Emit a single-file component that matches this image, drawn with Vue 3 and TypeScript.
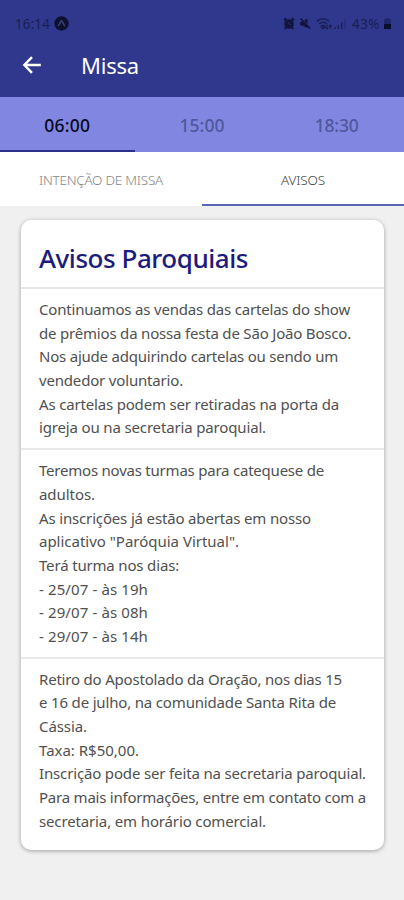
<script setup lang="ts">
import type { Directive } from 'vue'

interface Line {
  text: string
  width: number
}

const times: Line[] = [
  { text: '06:00', width: 46 },
  { text: '15:00', width: 45 },
  { text: '18:30', width: 44 },
]

const notices: Line[][] = [
  [
    { text: 'Continuamos as vendas das cartelas do show', width: 311 },
    { text: 'de prêmios da nossa festa de São João Bosco.', width: 312 },
    { text: 'Nos ajude adquirindo cartelas ou sendo um', width: 299 },
    { text: 'vendedor voluntario.', width: 144 },
    { text: 'As cartelas podem ser retiradas na porta da', width: 300 },
    { text: 'igreja ou na secretaria paroquial.', width: 227 },
  ],
  [
    { text: 'Teremos novas turmas para catequese de', width: 285 },
    { text: 'adultos.', width: 56 },
    { text: 'As inscrições já estão abertas em nosso', width: 272 },
    { text: 'aplicativo "Paróquia Virtual".', width: 200 },
    { text: 'Terá turma nos dias:', width: 140 },
    { text: '- 25/07 - às 19h', width: 109 },
    { text: '- 29/07 - às 08h', width: 109 },
    { text: '- 29/07 - às 14h', width: 109 },
  ],
  [
    { text: 'Retiro do Apostolado da Oração, nos dias 15', width: 303 },
    { text: 'e 16 de julho, na comunidade Santa Rita de', width: 297 },
    { text: 'Cássia.', width: 48 },
    { text: 'Taxa: R$50,00.', width: 100 },
    { text: 'Inscrição pode ser feita na secretaria paroquial.', width: 327 },
    { text: 'Para mais informações, entre em contato com a', width: 327 },
    { text: 'secretaria, em horário comercial.', width: 227 },
  ],
]

// Tracks the text so that it fills the given width in pixels.
const vFit: Directive<HTMLElement, number> = {
  mounted(el, { value }) {
    requestAnimationFrame(() => {
      const natural = el.getBoundingClientRect().width
      const count = (el.textContent ?? '').length
      el.style.letterSpacing = `${(value - natural) / count}px`
    })
  },
}
</script>

<template>
  <div class="screen">
    <header class="top">
      <div class="status">
        <span v-fit="35" class="t">16:14</span>
        <svg class="badge" width="15" height="15" viewBox="0 0 15 15">
          <circle cx="7.5" cy="7.5" r="7.2" fill="#0d1030" />
          <path d="M4.2 10.2 7 5.2q.5-.7 1 0l2.8 5" fill="none" stroke="#3a4079" stroke-width="1.5" />
        </svg>
        <span class="grow"></span>
        <svg width="12" height="13" viewBox="0 0 12 13">
          <circle cx="6" cy="7" r="4.8" fill="#11143c" />
          <path d="M1 3.3 3.3 1.2M11 3.3 8.7 1.2M2.8 10.6 1.8 12M9.2 10.6l1 1.4" stroke="#11143c" stroke-width="2" />
          <path d="M6 5V7l1.6.8" fill="none" stroke="#2c3372" stroke-width="1" />
        </svg>
        <svg class="mute" width="12" height="13" viewBox="0 0 12 13">
          <path d="M1 5h2.2L8.5 1.5v9.8L3.6 8.5H1z" fill="#11143c" />
          <path d="m2 1.2 9.5 10" stroke="#2f388c" stroke-width="1.2" />
          <path d="m1.5 1.5 9.6 10" stroke="#11143c" stroke-width="1.5" />
        </svg>
        <svg class="wifi" width="17" height="13" viewBox="0 0 17 13">
          <path d="M1 4.2q6-4.8 12 0M3 6.8q4-3.2 8 0M5 9.2q2-1.5 4 0" fill="none" stroke="#1a1e55" stroke-width="1.5" />
          <path d="m7 12 2-2H5zM11 7.5v4.3M9.5 10.3l1.5 1.6 1.5-1.6M14.5 12V8M13 9.5 14.5 8 16 9.5" fill="none" stroke="#1a1e55" stroke-width="1.1" />
        </svg>
        <svg class="signal" width="13" height="12" viewBox="0 0 13 12">
          <path d="M1 11V9M4.3 11V7M7.7 11V4.5" stroke="#1a1e55" stroke-width="1.4" />
          <path d="M11 11V1" stroke="#272c70" stroke-width="1.2" />
        </svg>
        <span v-fit="28" class="t pct">43%</span>
        <svg class="battery" width="9" height="12" viewBox="0 0 9 12">
          <path d="M2.8 0h3.4v1.3H8V6H1V1.3h1.8z" fill="#20266b" />
          <path d="M1 6h7v5H1z" fill="#0b0d2c" />
        </svg>
      </div>
      <div class="bar">
        <svg width="20" height="20" viewBox="0 0 20 20">
          <path d="M10 2.2 2.4 10l7.6 7.8M2.4 10h16.4" fill="none" stroke="#fff" stroke-width="2.5" />
        </svg>
        <h1><span v-fit="58">Missa</span></h1>
      </div>
    </header>

    <nav class="times">
      <div v-for="(time, i) in times" :key="time.text" class="time" :class="{ active: i === 0 }">
        <span v-fit="time.width">{{ time.text }}</span>
      </div>
    </nav>

    <nav class="tabs">
      <div class="tab"><span v-fit="124">INTENÇÃO DE MISSA</span></div>
      <div class="tab selected"><span v-fit="44">AVISOS</span></div>
    </nav>

    <main class="card">
      <h2><span v-fit="209">Avisos Paroquiais</span></h2>
      <section v-for="(notice, n) in notices" :key="n" class="notice">
        <div v-for="line in notice" :key="line.text" class="line">
          <span v-fit="line.width">{{ line.text }}</span>
        </div>
      </section>
    </main>
  </div>
</template>

<style>
body {
  background: #f0f0f0;
}
</style>

<style scoped>
.screen {
  width: 404px;
  height: 900px;
  overflow: hidden;
  background: #f0f0f0;
  font-family: "Noto Sans", "Open Sans", sans-serif;
  color: #505050;
}
.screen span {
  white-space: pre;
}
.top {
  height: 97px;
  box-sizing: border-box;
  background: #2f388c;
}
.status {
  height: 46px;
  display: flex;
  align-items: center;
  padding: 1px 12px 0 15px;
  box-sizing: border-box;
}
.t {
  font-size: 13.5px;
  color: #1b1f52;
}
.pct {
  margin-left: 5px;
}
.badge {
  margin-left: 4px;
}
.grow {
  flex: 1;
}
.mute {
  margin-left: 4px;
}
.wifi {
  margin-left: 5px;
}
.signal {
  margin-left: 1px;
}
.battery {
  margin-left: 3px;
}
.bar {
  height: 38px;
  display: flex;
  align-items: center;
  padding-left: 22px;
}
h1 {
  margin: 0 0 0 39px;
  font-size: 22px;
  line-height: 30px;
  font-weight: 400;
  color: #fff;
}
.times {
  display: flex;
  height: 55px;
  background: #8187e0;
}
.time {
  flex: 1;
  display: flex;
  align-items: center;
  justify-content: center;
  box-sizing: border-box;
  padding-top: 2px;
  border-bottom: 2px solid transparent;
  font-size: 17.5px;
  color: #51569d;
  font-weight: 500;
}
.time.active {
  color: #080922;
  border-bottom-color: #29318a;
}
.tabs {
  display: flex;
  height: 54px;
  background: #fff;
}
.tab {
  flex: 1;
  display: flex;
  align-items: center;
  justify-content: center;
  box-sizing: border-box;
  padding-top: 3px;
  border-bottom: 2px solid transparent;
  font-size: 13.5px;
  font-weight: 300;
  color: #868686;
}
.tab.selected {
  color: #444;
  border-bottom-color: #5a67b8;
}
.card {
  box-sizing: border-box;
  width: 363px;
  height: 630px;
  margin: 14px 0 0 21px;
  border-radius: 10px;
  background: #fff;
  box-shadow: 0 1px 4px rgba(0, 0, 0, 0.34);
}
h2 {
  margin: 0;
  height: 67px;
  box-sizing: border-box;
  padding: 19px 0 0 18px;
  font-size: 26px;
  line-height: 38px;
  font-weight: 500;
  color: #1c1c7c;
}
.notice {
  border-top: 2px solid #e8e8e8;
  padding: 9px 0 8.3px 18px;
}
.line {
  height: 23.67px;
  line-height: 23.67px;
  font-size: 15px;
}
</style>
